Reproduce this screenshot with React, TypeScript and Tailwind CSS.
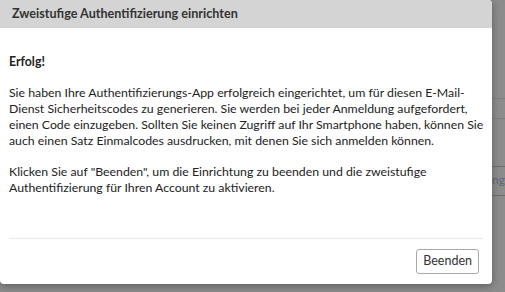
const font = "font-['Segoe_UI','Lato','Liberation_Sans',sans-serif]";

export default function App() {
  return (
    <main className={`relative h-[292px] w-[505px] overflow-hidden bg-[#8c8c8c] ${font}`}>
      {/* page behind the overlay */}
      <div className="absolute right-0 top-0 h-full w-[13px]">
        <div className="mt-[98px] h-[20px] border-t border-[#7e7e7e]" />
        <div className="h-[48px] border-t border-[#7e7e7e]" />
        <div className="h-[29px] border-t border-[#6f6f6f] pt-[6px] text-[12px] leading-[14px] text-[#5f6a78]">ng-</div>
        <div className="border-t border-[#6f6f6f]" />
      </div>

      <section className="relative flex h-[284px] w-[492px] flex-col rounded-b-[4px] rounded-tr-[4px] bg-white shadow-[0_2px_8px_rgba(0,0,0,0.35)]">
        <header className="flex h-[28px] items-center rounded-tr-[4px] bg-[#d4d4d4] px-[12px]">
          <h1 className="text-[12.6px] font-bold text-[#333]">Zweistufige Authentifizierung einrichten</h1>
        </header>

        <div className="flex-1 whitespace-nowrap px-[9px] pt-[26px] text-[12.3px] leading-[16px] text-[#222]">
          <p className="font-bold">Erfolg!</p>
          <p className="mt-[15px]">
            Sie haben Ihre Authentifizierungs-App erfolgreich eingerichtet, um für diesen E-Mail-
            <br />
            Dienst Sicherheitscodes zu generieren. Sie werden bei jeder Anmeldung aufgefordert,
            <br />
            einen Code einzugeben. Sollten Sie keinen Zugriff auf Ihr Smartphone haben, können Sie
            <br />
            auch einen Satz Einmalcodes ausdrucken, mit denen Sie sich anmelden können.
          </p>
          <p className="mt-[15px]">
            Klicken Sie auf "Beenden", um die Einrichtung zu beenden und die zweistufige
            <br />
            Authentifizierung für Ihren Account zu aktivieren.
          </p>
        </div>

        <footer className="mx-[9px] flex h-[46px] items-start justify-end border-t border-[#e8e8e8] pr-[4px] pt-[10px]">
          <button className="h-[25px] rounded-[3px] border border-[#a8a8a8] bg-white px-[6px] text-[12.5px] text-[#333]">
            Beenden
          </button>
        </footer>
      </section>
    </main>
  );
}
